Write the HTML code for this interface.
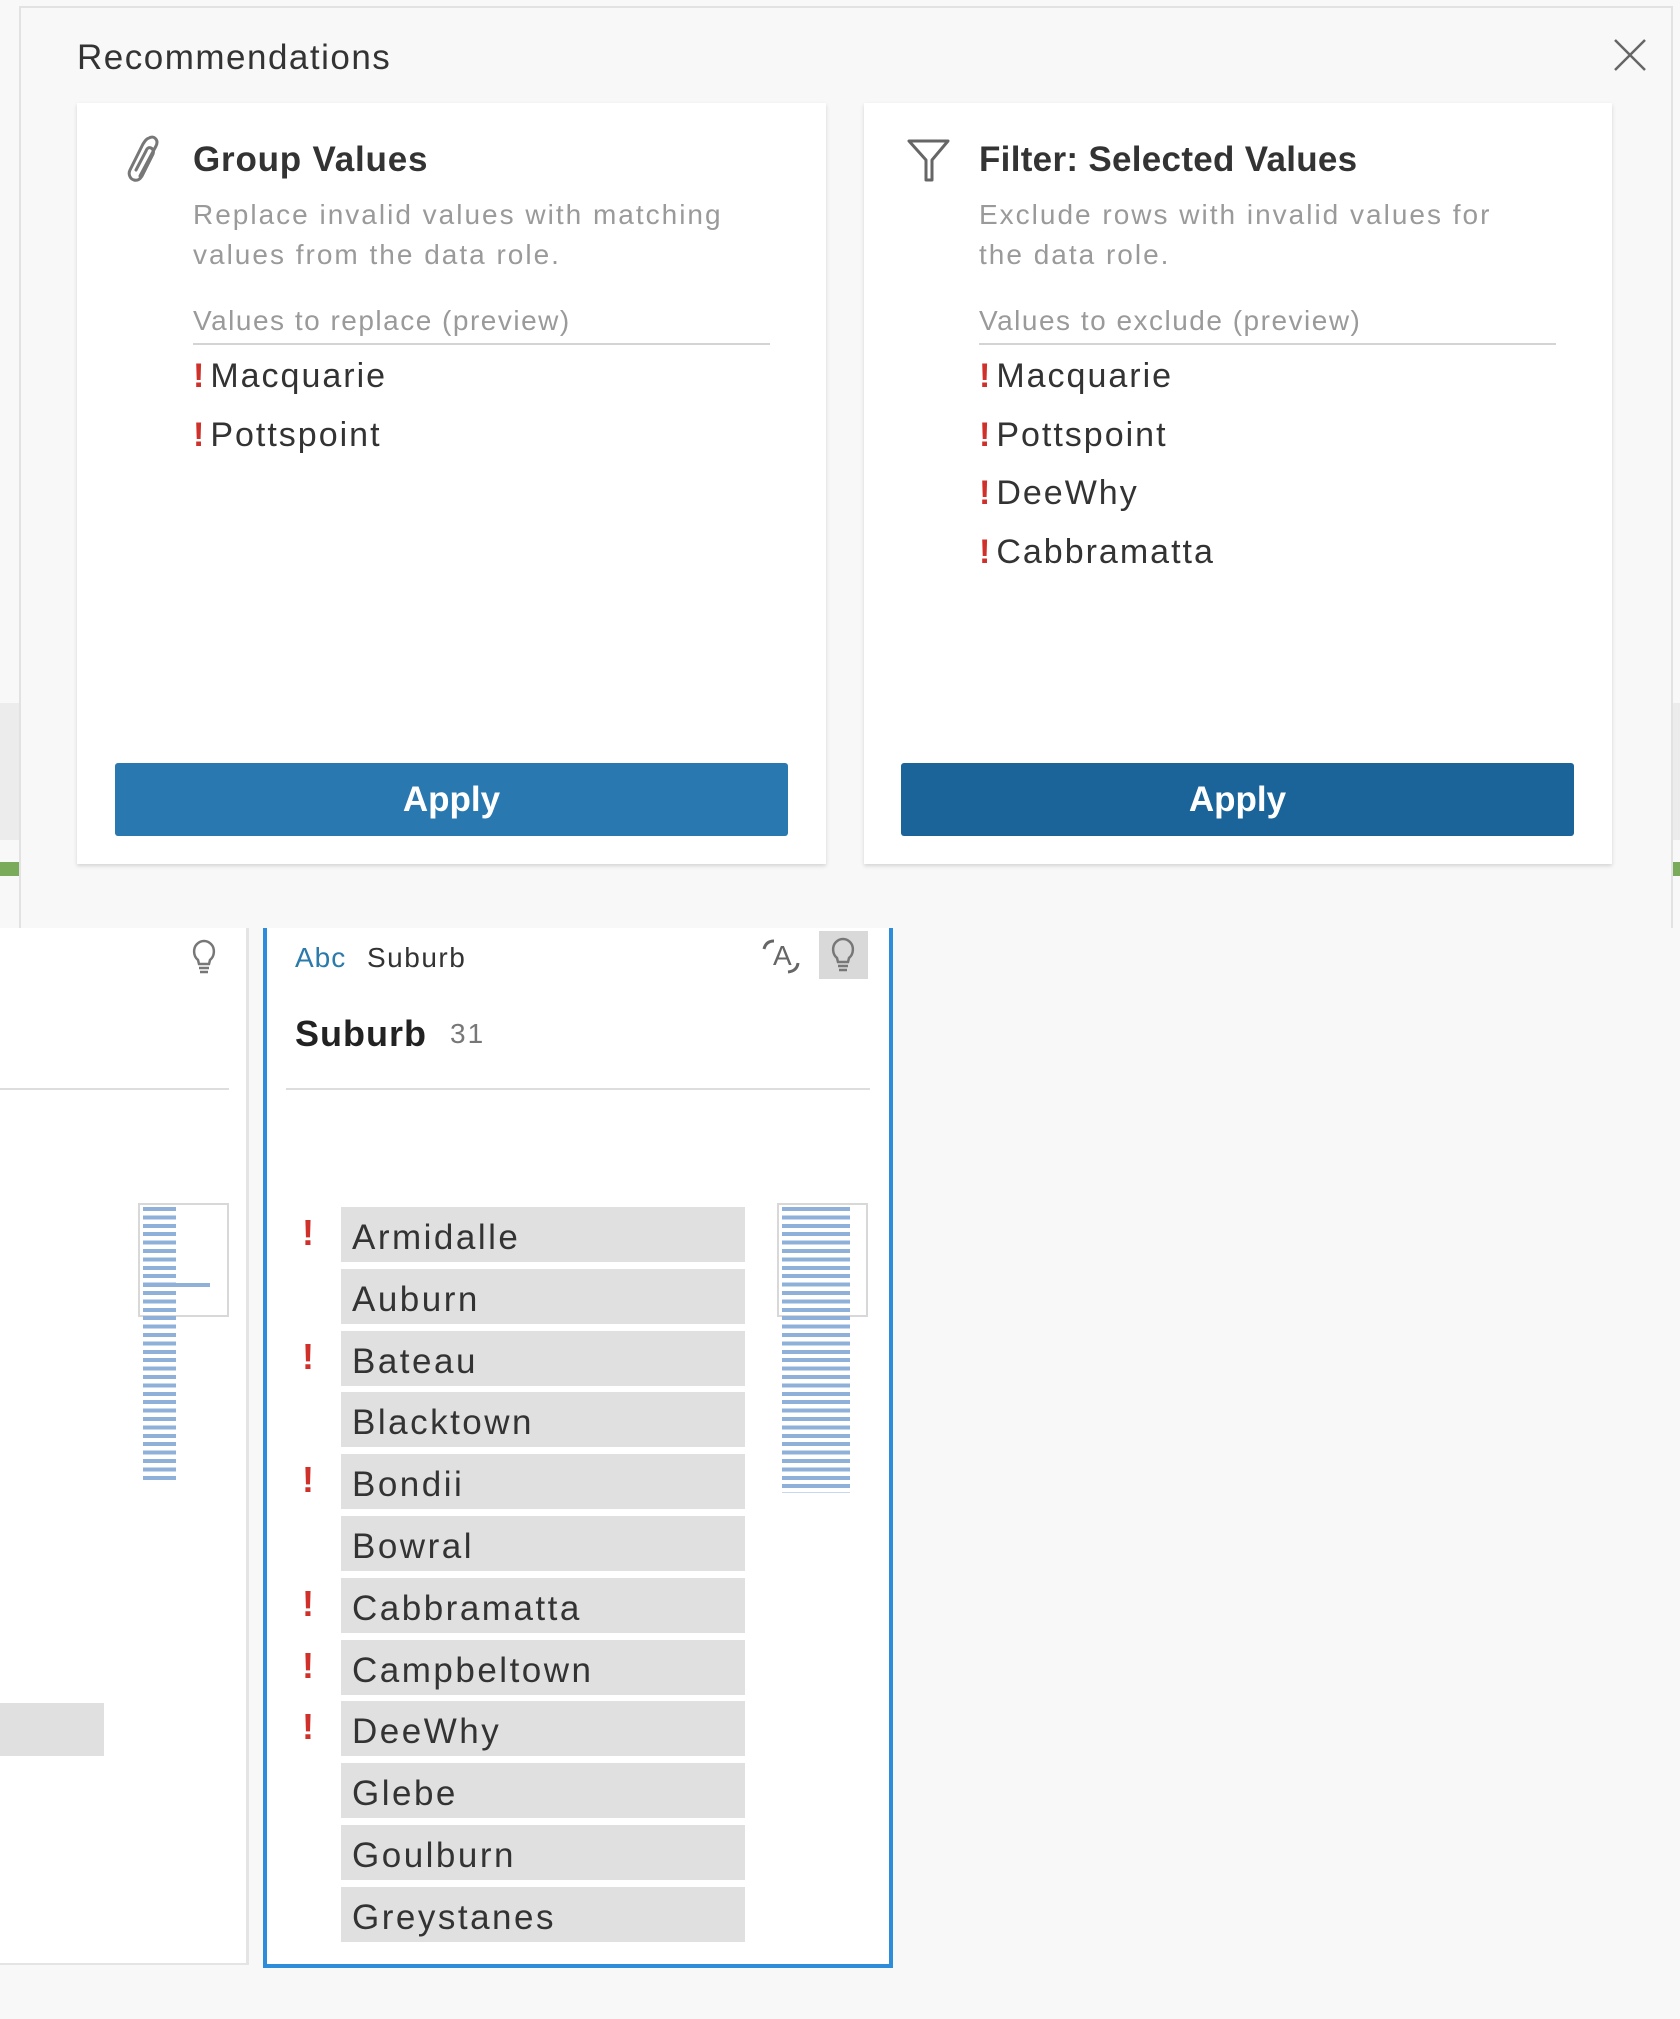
<!DOCTYPE html>
<html><head><meta charset="utf-8"><style>
*{margin:0;padding:0;box-sizing:border-box}
body{width:1680px;height:2019px;position:relative;overflow:hidden;background:#f8f8f8;font-family:"Liberation Sans",sans-serif;color:#333}
.a{position:absolute;white-space:nowrap}
.pop{position:absolute;left:19px;top:6px;width:1654px;height:922px;background:#f8f8f8;border:2px solid #e2e2e2;border-bottom:none}
.card{position:absolute;top:103px;height:761px;background:#fff;box-shadow:0 2px 4px rgba(0,0,0,.15)}
.ttl{font-size:35px;font-weight:bold;color:#333}
.desc{font-size:28px;color:#9a9a9a;line-height:40px;letter-spacing:2px}
.sub{font-size:28px;color:#9a9a9a;letter-spacing:1.5px}
.item{font-size:34px;color:#333;letter-spacing:2px}
.ex{color:#d0302a;font-weight:bold;margin-right:4px}
.btn{position:absolute;top:763px;height:73px;border-radius:3px;color:#fff;font-weight:bold;font-size:35px;text-align:center;line-height:73px}
.row{position:absolute;left:341px;width:404px;height:55px;background:#e0e0e0;font-size:35px;line-height:62px;padding-left:11px;color:#333;letter-spacing:2.5px}
.rex{position:absolute;left:302px;font-size:36px;font-weight:bold;color:#d0302a}
.stripe{background:repeating-linear-gradient(to bottom,#8fb0d8 0,#8fb0d8 4px,transparent 4px,transparent 8.4px)}
</style></head><body>
<div class="a" style="left:0;top:0;width:19px;height:928px;background:#f8f8f8"></div>
<div class="a" style="left:0;top:703px;width:19px;height:137px;background:#ececec"></div>
<div class="a" style="left:0;top:862px;width:19px;height:14px;background:#7aab5a"></div>
<div class="a" style="left:1672px;top:703px;width:8px;height:137px;background:#ececec"></div>
<div class="a" style="left:1672px;top:862px;width:8px;height:14px;background:#7aab5a"></div>

<div class="a" style="left:0;top:928px;width:249px;height:1037px;background:#fff;border-right:3px solid #e4e4e4;border-bottom:2px solid #e4e4e4"></div>
<svg class="a" style="left:190px;top:938px" width="28" height="38" viewBox="0 0 28 38"><path d="M8 22 C3 18 3 10 7 6 C11 2 17 2 21 6 C25 10 25 18 20 22 L19 26 L9 26 Z" fill="none" stroke="#777" stroke-width="2.5"/><path d="M9 30 H19 M10 34 H18" stroke="#777" stroke-width="2.5"/></svg>
<div class="a" style="left:0;top:1088px;width:229px;height:2px;background:#ddd"></div>
<div class="a" style="left:138px;top:1203px;width:91px;height:114px;border:2px solid #d8d8d8;background:#fff"></div>
<div class="a stripe" style="left:143px;top:1207px;width:33px;height:276px"></div>
<div class="a" style="left:143px;top:1283px;width:67px;height:4px;background:#8fb0d8"></div>
<div class="a" style="left:0;top:1703px;width:104px;height:53px;background:#e0e0e0"></div>

<div class="a" style="left:263px;top:900px;width:630px;height:1068px;background:#fff;border:4px solid #2e8ddb;border-top:none"></div>
<div class="a" style="left:295px;top:942px;font-size:28px;color:#2a7aab;letter-spacing:1px">Abc</div>
<div class="a" style="left:367px;top:942px;font-size:28px;color:#333;letter-spacing:1.5px">Suburb</div>
<svg class="a" style="left:760px;top:935px" width="50" height="42" viewBox="0 0 50 42"><text x="13" y="30" font-family="Liberation Sans" font-size="28" fill="#666">A</text><path d="M4 14 Q6 6 14 6" fill="none" stroke="#666" stroke-width="3"/><path d="M38 28 Q37 36 28 37" fill="none" stroke="#666" stroke-width="3"/></svg>
<div class="a" style="left:819px;top:931px;width:49px;height:48px;background:#d9d9d9"></div>
<svg class="a" style="left:829px;top:936px" width="28" height="38" viewBox="0 0 28 38"><path d="M8 22 C3 18 3 10 7 6 C11 2 17 2 21 6 C25 10 25 18 20 22 L19 26 L9 26 Z" fill="none" stroke="#777" stroke-width="2.5"/><path d="M9 30 H19 M10 34 H18" stroke="#777" stroke-width="2.5"/></svg>
<div class="a" style="left:295px;top:1013px;font-size:36px;font-weight:bold;color:#222;letter-spacing:1px">Suburb</div>
<div class="a" style="left:450px;top:1018px;font-size:28px;color:#777;letter-spacing:2px">31</div>
<div class="a" style="left:286px;top:1088px;width:584px;height:2px;background:#ddd"></div>
<div class="a" style="left:777px;top:1203px;width:91px;height:114px;border:2px solid #d8d8d8;background:#fff"></div>
<div class="a stripe" style="left:782px;top:1207px;width:68px;height:286px"></div>

<div class="row" style="top:1207px">Armidalle</div><div class="rex a" style="top:1212px">!</div>
<div class="row" style="top:1269px">Auburn</div>
<div class="row" style="top:1331px">Bateau</div><div class="rex a" style="top:1336px">!</div>
<div class="row" style="top:1392px">Blacktown</div>
<div class="row" style="top:1454px">Bondii</div><div class="rex a" style="top:1459px">!</div>
<div class="row" style="top:1516px">Bowral</div>
<div class="row" style="top:1578px">Cabbramatta</div><div class="rex a" style="top:1583px">!</div>
<div class="row" style="top:1640px">Campbeltown</div><div class="rex a" style="top:1645px">!</div>
<div class="row" style="top:1701px">DeeWhy</div><div class="rex a" style="top:1706px">!</div>
<div class="row" style="top:1763px">Glebe</div>
<div class="row" style="top:1825px">Goulburn</div>
<div class="row" style="top:1887px">Greystanes</div>

<div class="pop"></div>
<div class="a" style="left:77px;top:38px;font-size:35px;color:#333;letter-spacing:1.5px">Recommendations</div>
<svg class="a" style="left:1612px;top:37px" width="36" height="36" viewBox="0 0 36 36"><path d="M3 3 L33 33 M33 3 L3 33" stroke="#666" stroke-width="2.5"/></svg>

<div class="card" style="left:77px;width:749px"></div>
<div class="card" style="left:864px;width:748px"></div>

<svg class="a" style="left:120px;top:132px" width="48" height="54" viewBox="0 0 48 54"><path d="M20 44 L36 14 C39 8 34 3 29 6 C26 7 25 9 23 12 L10 38 C8 42 10 47 14 48 C18 49 20 47 22 44 L33 22 C34 19 33 17 31 16 C29 15 27 16 26 19 L16 38" fill="none" stroke="#777" stroke-width="3" stroke-linecap="round"/></svg>
<div class="a ttl" style="left:193px;top:140px;letter-spacing:0.8px">Group Values</div>
<div class="a desc" style="left:193px;top:195px">Replace invalid values with matching<br>values from the data role.</div>
<div class="a sub" style="left:193px;top:305px">Values to replace (preview)</div>
<div class="a" style="left:193px;top:343px;width:577px;height:2px;background:#d4d4d4"></div>
<div class="a item" style="left:193px;top:357px"><span class="ex">!</span>Macquarie</div>
<div class="a item" style="left:193px;top:416px"><span class="ex">!</span>Pottspoint</div>
<div class="btn" style="left:115px;width:673px;background:#2a78b0">Apply</div>

<svg class="a" style="left:906px;top:138px" width="46" height="46" viewBox="0 0 46 46"><path d="M3 3 H42 L26 22 V42 H20 V22 Z" fill="none" stroke="#666" stroke-width="3" stroke-linejoin="round"/></svg>
<div class="a ttl" style="left:979px;top:140px;letter-spacing:0.3px">Filter: Selected Values</div>
<div class="a desc" style="left:979px;top:195px">Exclude rows with invalid values for<br>the data role.</div>
<div class="a sub" style="left:979px;top:305px">Values to exclude (preview)</div>
<div class="a" style="left:979px;top:343px;width:577px;height:2px;background:#d4d4d4"></div>
<div class="a item" style="left:979px;top:357px"><span class="ex">!</span>Macquarie</div>
<div class="a item" style="left:979px;top:416px"><span class="ex">!</span>Pottspoint</div>
<div class="a item" style="left:979px;top:474px"><span class="ex">!</span>DeeWhy</div>
<div class="a item" style="left:979px;top:533px"><span class="ex">!</span>Cabbramatta</div>
<div class="btn" style="left:901px;width:673px;background:#1b6499">Apply</div>
</body></html>
